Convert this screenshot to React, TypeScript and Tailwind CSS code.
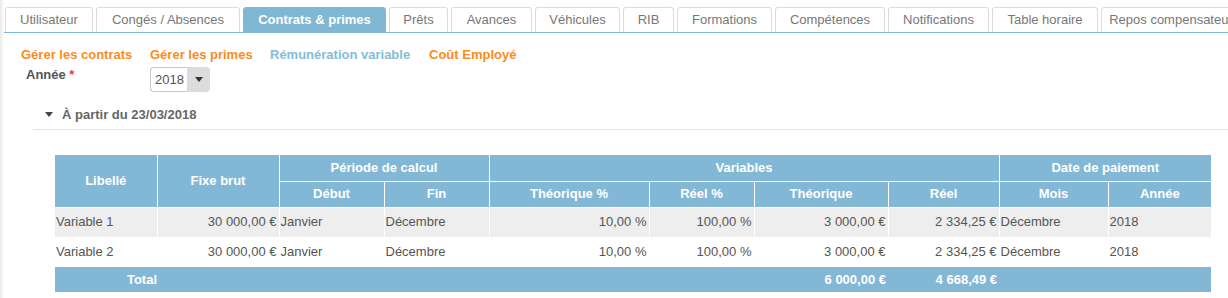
const tabs: [string, number][] = [
  ["Utilisateur", 88],
  ["Congés / Absences", 144],
  ["Contrats & primes", 143],
  ["Prêts", 59],
  ["Avances", 81],
  ["Véhicules", 85],
  ["RIB", 51],
  ["Formations", 95],
  ["Compétences", 110],
  ["Notifications", 101],
  ["Table horaire", 106],
  ["Repos compensateur", 140],
];

const rows = [
  { label: "Variable 1", fixe: "30 000,00 €", debut: "Janvier", fin: "Décembre", thPct: "10,00 %", rePct: "100,00 %", th: "3 000,00 €", re: "2 334,25 €", mois: "Décembre", annee: "2018" },
  { label: "Variable 2", fixe: "30 000,00 €", debut: "Janvier", fin: "Décembre", thPct: "10,00 %", rePct: "100,00 %", th: "3 000,00 €", re: "2 334,25 €", mois: "Décembre", annee: "2018" },
];

export default function App() {
  return (
    <div className="flex h-[298px] w-[1228px] overflow-hidden bg-white text-[13px] text-[#555] font-['Liberation_Sans',Arial,sans-serif]">
      <div className="w-[4px] shrink-0 bg-gradient-to-r from-[#e9e9e9] to-white" />
      <div className="flex-1 min-w-0">
        {/* tabs */}
        <div className="mt-[7px] flex gap-[3px] border-b border-[#7fb6d3] pl-[1px] whitespace-nowrap">
          {tabs.map(([t, w]) => (
            <div
              key={t}
              style={{ width: w }}
              className={
                t === "Contrats & primes"
                  ? "h-[25px] shrink-0 overflow-hidden rounded-t-[3px] border border-[#80b7d3] bg-[#80b7d3] text-center leading-[23px] font-bold text-white"
                  : "h-[25px] shrink-0 overflow-hidden rounded-t-[3px] border border-b-0 border-[#dcdcdc] text-center leading-[24px] text-[#777]"
              }
            >
              {t}
            </div>
          ))}
        </div>

        {/* sub links */}
        <div className="mt-[14px] flex pl-[17px] font-bold leading-[16px]">
          <span className="w-[129px] text-[#fb8c1c]">Gérer les contrats</span>
          <span className="w-[120px] text-[#fb8c1c]">Gérer les primes</span>
          <span className="w-[159px] text-[#86bcd8]">Rémunération variable</span>
          <span className="text-[#fb8c1c]">Coût Employé</span>
        </div>

        {/* annee */}
        <div className="mt-[4px] flex items-start pl-[22px]">
          <div className="w-[124px] font-bold leading-[16px] text-[#555]">
            Année <span className="text-[#e23a3a]">*</span>
          </div>
          <div className="flex h-[25px] items-stretch">
            <div className="flex w-[37px] items-center rounded-l-[4px] border border-r-0 border-[#c8c8c8] pl-[4px] text-[#555]">2018</div>
            <div className="flex w-[23px] items-center justify-center rounded-r-[4px] bg-[#dcdcdc]">
              <svg width="8" height="5" viewBox="0 0 8 5">
                <path d="M0 0h8L4 5z" fill="#333" />
              </svg>
            </div>
          </div>
        </div>

        {/* section header */}
        <div className="ml-[29px] mt-[11px] flex h-[27px] items-center border-b border-[#e3e3e3] pb-[3px]">
          <svg className="ml-[12px]" width="8" height="5" viewBox="0 0 8 5">
            <path d="M0 0h8L4 5z" fill="#444" />
          </svg>
          <span className="ml-[9px] font-bold text-[#666]">À partir du 23/03/2018</span>
        </div>

        {/* table */}
        <table className="ml-[51px] mt-[25px] w-[1156px] table-fixed border-collapse leading-[16px]">
          <colgroup>
            <col className="w-[102px]" />
            <col className="w-[122px]" />
            <col className="w-[105px]" />
            <col className="w-[105px]" />
            <col className="w-[160px]" />
            <col className="w-[105px]" />
            <col className="w-[134px]" />
            <col className="w-[111px]" />
            <col className="w-[109px]" />
            <col className="w-[103px]" />
          </colgroup>
          <thead className="bg-[#82b8d5] font-bold text-white">
            <tr className="h-[26px]">
              <th rowSpan={2} className="border border-white border-t-0 border-l-0">Libellé</th>
              <th rowSpan={2} className="border border-white border-t-0">Fixe brut</th>
              <th colSpan={2} className="border border-white border-t-0">Période de calcul</th>
              <th colSpan={4} className="border border-white border-t-0">Variables</th>
              <th colSpan={2} className="border border-white border-t-0 border-r-0">Date de paiement</th>
            </tr>
            <tr className="h-[26px]">
              <th className="border border-white">Début</th>
              <th className="border border-white">Fin</th>
              <th className="border border-white">Théorique %</th>
              <th className="border border-white">Réel %</th>
              <th className="border border-white">Théorique</th>
              <th className="border border-white">Réel</th>
              <th className="border border-white">Mois</th>
              <th className="border border-white border-r-0">Année</th>
            </tr>
          </thead>
          <tbody>
            {rows.map((r, i) => (
              <tr key={r.label} className={i === 0 ? "h-[30px] bg-[#eeeeee]" : "h-[30px] bg-white"}>
                <td className="border-r border-white pl-[1px]">{r.label}</td>
                <td className="border-r border-white text-right pr-[2px]">{r.fixe}</td>
                <td className="border-r border-white pl-[1px]">{r.debut}</td>
                <td className="border-r border-white pl-[1px]">{r.fin}</td>
                <td className="border-r border-white text-right pr-[2px]">{r.thPct}</td>
                <td className="border-r border-white text-right pr-[2px]">{r.rePct}</td>
                <td className="border-r border-white text-right pr-[2px]">{r.th}</td>
                <td className="border-r border-white text-right pr-[2px]">{r.re}</td>
                <td className="border-r border-white pl-[1px]">{r.mois}</td>
                <td className="pl-[1px]">{r.annee}</td>
              </tr>
            ))}
            <tr className="h-[25px] bg-[#82b8d5] font-bold text-white">
              <td className="text-right">Total</td>
              <td />
              <td />
              <td />
              <td />
              <td />
              <td className="text-right pr-[2px]">6 000,00 €</td>
              <td className="text-right pr-[2px]">4 668,49 €</td>
              <td />
              <td />
            </tr>
          </tbody>
        </table>
      </div>
    </div>
  );
}
